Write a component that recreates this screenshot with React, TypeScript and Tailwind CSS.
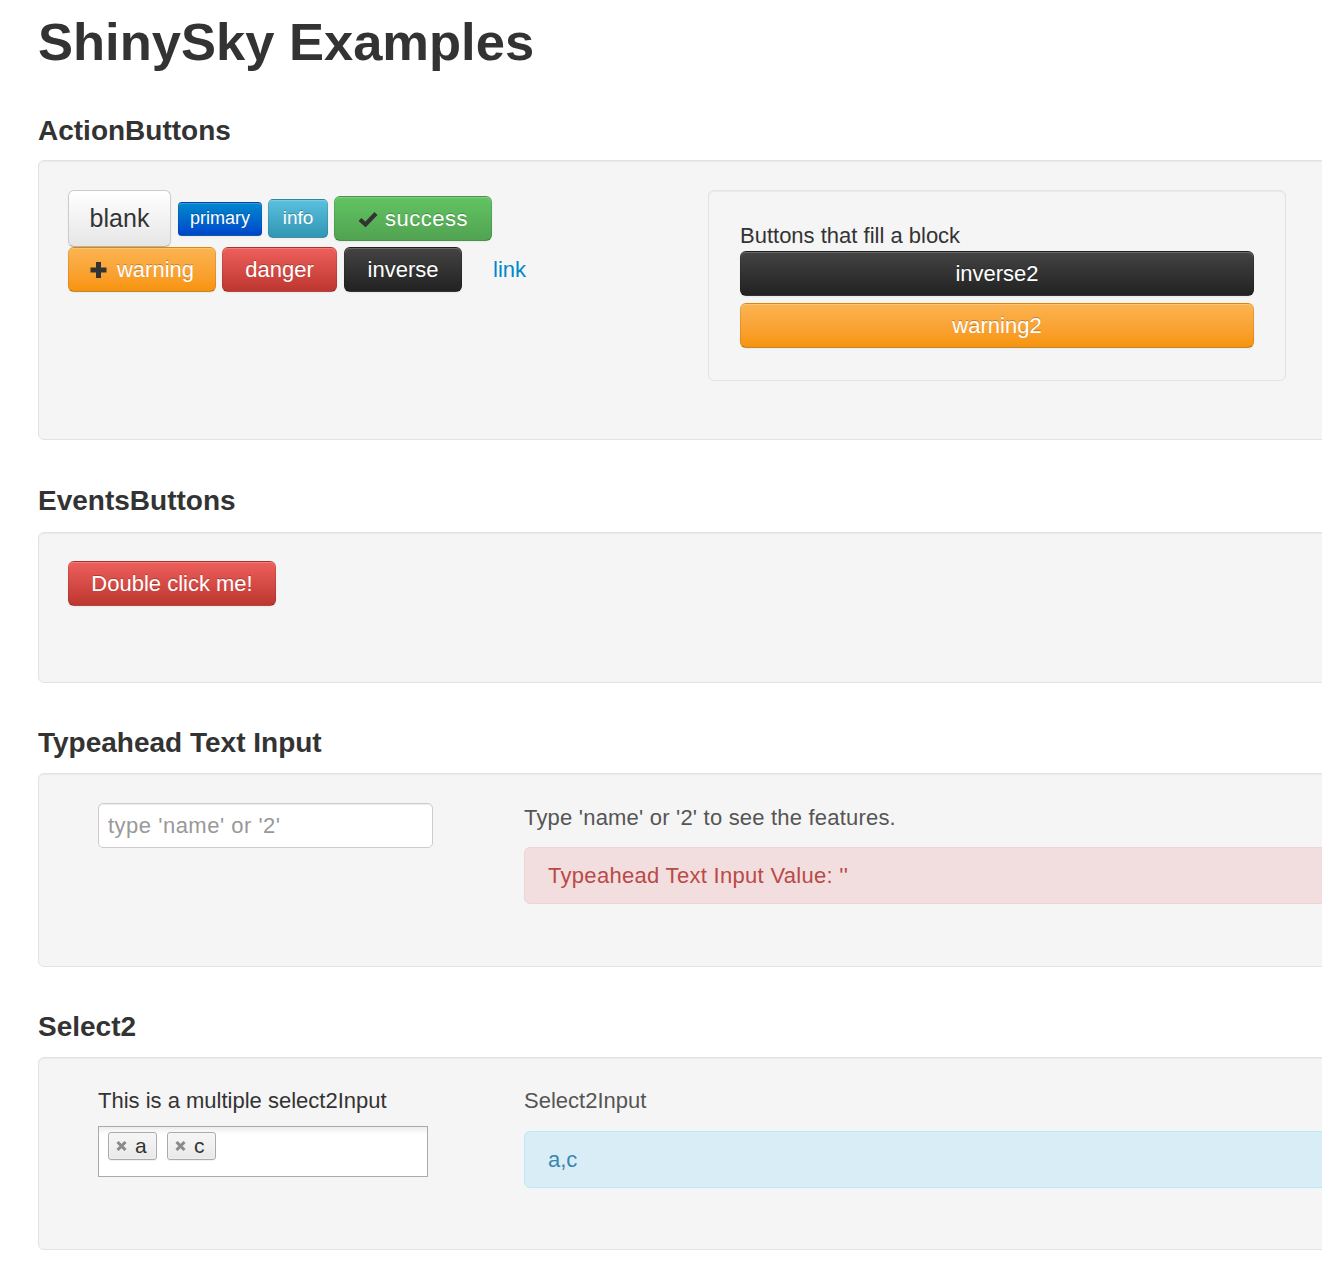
import React from "react";

const font = { fontFamily: '"Liberation Sans", Arial, Helvetica, sans-serif' };

function CheckIcon() {
  return (
    <svg width="20" height="16" viewBox="0 0 20 16" className="shrink-0">
      <polyline points="2,8.5 7.5,13.5 18,2.5" fill="none" stroke="#333" strokeWidth="4.2" strokeLinecap="butt" strokeLinejoin="miter" />
    </svg>
  );
}

function PlusIcon() {
  return (
    <svg width="17" height="16" viewBox="0 0 17 16" className="shrink-0">
      <rect x="0.5" y="5.5" width="16" height="5" fill="#333" />
      <rect x="6" y="0" width="5" height="16" fill="#333" />
    </svg>
  );
}

function XIcon() {
  return (
    <svg width="11" height="10" viewBox="0 0 11 10" className="shrink-0">
      <path d="M1.5 1 L9.5 9 M9.5 1 L1.5 9" stroke="#8a8a8a" strokeWidth="3" strokeLinecap="butt" />
    </svg>
  );
}

const colored =
  "flex items-center justify-center text-white border border-black/10 border-b-black/25 [text-shadow:0_-1px_0_rgba(0,0,0,0.25)] shadow-[inset_0_1px_0_rgba(255,255,255,0.2),0_1px_2px_rgba(0,0,0,0.05)]";

const well =
  "w-[1360px] box-border bg-[#f5f5f5] border border-[#e3e3e3] rounded-[6px] shadow-[inset_0_1px_1px_rgba(0,0,0,0.05)]";

const h3 = "text-[28px] leading-[30px] font-bold text-[#333] whitespace-nowrap";

export default function App() {
  return (
    <div className="w-full min-h-[1276px] overflow-hidden bg-white text-[#333]" style={font}>
      <div className="pl-[38px] pt-[12px]">
        <h1 className="text-[52.5px] leading-[60px] font-bold text-[#333] whitespace-nowrap">ShinySky Examples</h1>

        {/* ActionButtons */}
        <h3 className={`mt-[44px] ${h3}`}>ActionButtons</h3>
        <div className={`mt-[14px] h-[280px] pt-[29px] pl-[29px] flex ${well}`}>
          <div className="w-[640px] shrink-0">
            <div className="h-[57px] flex items-center">
              <button className="w-[103px] h-[57px] flex items-center justify-center text-[25px] text-[#333] rounded-[6px] border border-[#ccc] border-b-[#b3b3b3] bg-linear-to-b from-white to-[#e6e6e6] [text-shadow:0_1px_1px_rgba(255,255,255,0.75)] shadow-[inset_0_1px_0_rgba(255,255,255,0.2),0_1px_2px_rgba(0,0,0,0.05)]">
                blank
              </button>
              <button className={`ml-[7px] w-[84px] h-[34px] text-[18px] rounded-[4px] bg-linear-to-b from-[#0088cc] to-[#0044cc] ${colored}`}>
                primary
              </button>
              <button className={`ml-[6px] w-[60px] h-[39px] text-[19px] rounded-[5px] bg-linear-to-b from-[#5bc0de] to-[#2f96b4] ${colored}`}>
                info
              </button>
              <button className={`ml-[6px] w-[158px] h-[45px] text-[22px] rounded-[6px] bg-linear-to-b from-[#62c462] to-[#51a351] gap-[7px] ${colored}`}>
                <CheckIcon />
                <span className="tracking-[0.5px]">success</span>
              </button>
            </div>
            <div className="h-[45px] flex items-center">
              <button className={`w-[148px] h-[45px] text-[22px] rounded-[6px] bg-linear-to-b from-[#fbb450] to-[#f89406] gap-[10px] ${colored}`}>
                <PlusIcon />
                <span>warning</span>
              </button>
              <button className={`ml-[6px] w-[115px] h-[45px] text-[22px] rounded-[6px] bg-linear-to-b from-[#ee5f5b] to-[#bd362f] ${colored}`}>
                danger
              </button>
              <button className={`ml-[7px] w-[118px] h-[45px] text-[22px] rounded-[6px] bg-linear-to-b from-[#444444] to-[#222222] ${colored}`}>
                inverse
              </button>
              <span className="ml-[31px] text-[22px] leading-[45px] text-[#0088cc]">link</span>
            </div>
          </div>
          <div className="w-[578px] h-[191px] box-border shrink-0 bg-[#f5f5f5] border border-[#e3e3e3] rounded-[6px] shadow-[inset_0_1px_1px_rgba(0,0,0,0.05)] pt-[31px] px-[31px]">
            <div className="text-[22px] leading-[28px] text-[#333] whitespace-nowrap">Buttons that fill a block</div>
            <button className={`mt-[1px] w-full h-[45px] text-[22px] rounded-[6px] bg-linear-to-b from-[#444444] to-[#222222] ${colored}`}>
              inverse2
            </button>
            <button className={`mt-[7px] w-full h-[45px] text-[22px] rounded-[6px] bg-linear-to-b from-[#fbb450] to-[#f89406] ${colored}`}>
              warning2
            </button>
          </div>
        </div>

        {/* EventsButtons */}
        <h3 className={`mt-[46px] ${h3}`}>EventsButtons</h3>
        <div className={`mt-[16px] h-[151px] pt-[28px] pl-[29px] ${well}`}>
          <button className={`w-[208px] h-[45px] text-[22px] rounded-[6px] bg-linear-to-b from-[#ee5f5b] to-[#bd362f] ${colored}`}>
            Double click me!
          </button>
        </div>

        {/* Typeahead */}
        <h3 className={`mt-[45px] ${h3}`}>Typeahead Text Input</h3>
        <div className={`mt-[15px] h-[194px] pt-[29px] pl-[59px] flex ${well}`}>
          <div className="w-[426px] shrink-0">
            <input
              type="text"
              placeholder="type 'name' or '2'"
              className="w-[335px] h-[45px] box-border bg-white border border-[#ccc] rounded-[5px] pl-[9px] text-[22px] tracking-[0.5px] text-[#555] placeholder:text-[#999] shadow-[inset_0_1px_1px_rgba(0,0,0,0.075)] outline-none"
              style={font}
            />
          </div>
          <div className="flex-1 pr-[29px]">
            <div className="mt-[1px] text-[22px] leading-[28px] text-[#555] tracking-[0.2px] whitespace-nowrap">Type 'name' or '2' to see the features.</div>
            <div className="mt-[15px] h-[57px] box-border flex items-center bg-[#f2dede] border border-[#eed3d7] rounded-[6px] pl-[23px] text-[22px] tracking-[0.3px] text-[#b94a48] whitespace-nowrap">
              Typeahead Text Input Value: ''
            </div>
          </div>
        </div>

        {/* Select2 */}
        <h3 className={`mt-[45px] ${h3}`}>Select2</h3>
        <div className={`mt-[15px] h-[193px] pt-[29px] pl-[59px] flex ${well}`}>
          <div className="w-[426px] shrink-0">
            <div className="text-[22px] leading-[28px] text-[#333] whitespace-nowrap">This is a multiple select2Input</div>
            <div className="mt-[11px] w-[330px] h-[51px] box-border border border-[#aaa] bg-linear-to-b from-[#eeeeee] from-[1%] to-white to-[15%] pt-[5px] pl-[9px] flex items-start gap-[10px]">
              {["a", "c"].map((t) => (
                <div
                  key={t}
                  className="w-[49px] h-[28px] box-border flex items-center border border-[#aaa] rounded-[3px] bg-linear-to-b from-[#f4f4f4] from-[20%] via-[#f0f0f0] via-[50%] to-[#e8e8e8] shadow-[inset_0_0_2px_white,0_1px_0_rgba(0,0,0,0.05)] pl-[7px]"
                >
                  <XIcon />
                  <span className="ml-[8px] text-[21px] leading-[26px] text-[#333]">{t}</span>
                </div>
              ))}
            </div>
          </div>
          <div className="flex-1 pr-[29px]">
            <div className="text-[22px] leading-[28px] text-[#555] whitespace-nowrap">Select2Input</div>
            <div className="mt-[16px] h-[57px] box-border flex items-center bg-[#d9edf7] border border-[#bce8f1] rounded-[6px] pl-[23px] text-[22px] text-[#3a87ad]">
              a,c
            </div>
          </div>
        </div>
      </div>
    </div>
  );
}
